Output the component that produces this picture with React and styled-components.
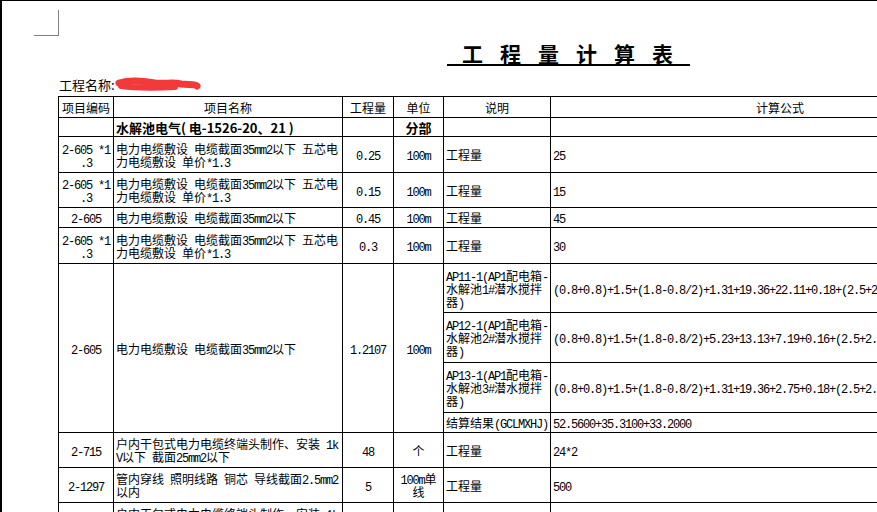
import React from 'react'
import styled, { createGlobalStyle } from 'styled-components'

const Global = createGlobalStyle`
  html, body { margin: 0; padding: 0; background: #fff; }
  body { font-family: "Noto Sans CJK SC", "Liberation Sans", sans-serif; color: #000; }
`

const Page = styled.div`
  width: 877px;
  height: 512px;
  box-sizing: border-box;
  border-top: 1px solid #000;
  border-left: 2px solid #000;
  overflow: hidden;
  background: #fff;
`

// crop mark in the top left of the page
const CornerMark = styled.div`
  margin: 9px 0 0 32px;
  width: 24px;
  height: 25px;
  border-right: 1px solid #808080;
  border-bottom: 1px solid #808080;
`

const TitleRow = styled.div`
  margin-top: 6px;
  padding-left: 445px;
`

const Title = styled.h1`
  display: inline-block;
  margin: 0;
  padding-left: 15px;
  font-size: 21px;
  line-height: 22px;
  font-weight: bold;
  letter-spacing: 17px;
  border-bottom: 2px solid #000;
  white-space: nowrap;
`

const NameRow = styled.div`
  display: flex;
  align-items: center;
  margin: 10px 0 0 57px;
  font-size: 13px;
  line-height: 16px;
`

const Table = styled.table`
  margin: 3px 0 0 56px;
  border-collapse: collapse;
  table-layout: fixed;
  width: 951px;
  font-size: 12px;
  line-height: 13px;
`

const Col = styled.col`
  width: ${p => p.$w}px;
`

const Row = styled.tr`
  height: ${p => p.$h}px;
`

const Cell = styled.td`
  border: 1px solid #000;
  padding: 0 2px;
  vertical-align: middle;
  text-align: ${p => p.$align || 'left'};
  font-weight: ${p => (p.$bold ? 'bold' : 'normal')};
  font-size: ${p => (p.$bold ? '13px' : '12px')};
  white-space: nowrap;
  overflow: hidden;
`

const Head = styled(Cell).attrs({ as: 'th' })`
  font-weight: normal;
  text-align: center;
`

const Line = styled.span`
  display: block;
  height: 13px;
  white-space: nowrap;
`

const Lat = styled.span`
  font-family: "Liberation Mono", "DejaVu Sans Mono", monospace;
  font-size: 12px;
  letter-spacing: -1.2px;
`

const mix = s =>
  s.split(/([ -~]+)/).map((p, i) => (/[ -~]/.test(p) ? <Lat key={i}>{p}</Lat> : p))

const Text = ({ lines }) =>
  [].concat(lines).map((l, i) => <Line key={i}>{mix(l)}</Line>)

const Scribble = () => (
  <svg width="86" height="16" viewBox="0 0 86 16">
    <path
      d="M4 6 C 14 3, 28 4, 40 6 C 52 7, 58 5, 66 7 C 74 8, 80 7, 82 9"
      stroke="#f23a3a"
      strokeWidth="7"
      strokeLinecap="round"
      fill="none"
    />
    <path d="M6 9 C 20 11, 40 11, 60 10" stroke="#f23a3a" strokeWidth="6" strokeLinecap="round" fill="none" />
  </svg>
)

const cable5 = ['电力电缆敷设 电缆截面35mm2以下 五芯电', '力电缆敷设 单价*1.3']

const rows = [
  { h: 36, code: ['2-605 *1', '.3'], name: cable5, qty: '0.25', unit: '100m', note: '工程量', formula: '25' },
  { h: 35, code: ['2-605 *1', '.3'], name: cable5, qty: '0.15', unit: '100m', note: '工程量', formula: '15' },
  { h: 20, code: '2-605', name: '电力电缆敷设 电缆截面35mm2以下', qty: '0.45', unit: '100m', note: '工程量', formula: '45' },
  { h: 36, code: ['2-605 *1', '.3'], name: cable5, qty: '0.3', unit: '100m', note: '工程量', formula: '30' },
]

const group = {
  code: '2-605',
  name: '电力电缆敷设 电缆截面35mm2以下',
  qty: '1.2107',
  unit: '100m',
  parts: [
    { h: 49, note: ['AP11-1(AP1配电箱-', '水解池1#潜水搅拌', '器)'], formula: '(0.8+0.8)+1.5+(1.8-0.8/2)+1.31+19.36+22.11+0.18+(2.5+2.5)*1.025' },
    { h: 50, note: ['AP12-1(AP1配电箱-', '水解池2#潜水搅拌', '器)'], formula: '(0.8+0.8)+1.5+(1.8-0.8/2)+5.23+13.13+7.19+0.16+(2.5+2.5)*1.025' },
    { h: 50, note: ['AP13-1(AP1配电箱-', '水解池3#潜水搅拌', '器)'], formula: '(0.8+0.8)+1.5+(1.8-0.8/2)+1.31+19.36+2.75+0.18+(2.5+2.5)*1.025' },
    { h: 20, note: '结算结果(GCLMXHJ)', formula: '52.5600+35.3100+33.2000' },
  ],
}

const tail = [
  { h: 35, code: '2-715', name: ['户内干包式电力电缆终端头制作、安装 1k', 'V以下 截面25mm2以下'], qty: '48', unit: '个', note: '工程量', formula: '24*2' },
  { h: 35, code: '2-1297', name: ['管内穿线 照明线路 铜芯 导线截面2.5mm2', '以内'], qty: '5', unit: ['100m单', '线'], note: '工程量', formula: '500' },
  { h: 35, code: '2-1298', name: ['户内干包式电力电缆终端头制作、安装 1k', 'V以下 截面35mm2以下'], qty: '26', unit: '个', note: '工程量', formula: '26' },
]

const ItemRow = ({ r }) => (
  <Row $h={r.h}>
    <Cell $align="center"><Text lines={r.code} /></Cell>
    <Cell><Text lines={r.name} /></Cell>
    <Cell $align="center"><Text lines={r.qty} /></Cell>
    <Cell $align="center"><Text lines={r.unit} /></Cell>
    <Cell><Text lines={r.note} /></Cell>
    <Cell><Text lines={r.formula} /></Cell>
  </Row>
)

export default function App() {
  return (
    <>
      <Global />
      <Page>
        <CornerMark />
        <TitleRow>
          <Title>工程量计算表</Title>
        </TitleRow>
        <NameRow>
          工程名称:<Scribble />
        </NameRow>
        <Table>
          <colgroup>
            {[55, 229, 51, 50, 107, 459].map((w, i) => <Col key={i} $w={w} />)}
          </colgroup>
          <tbody>
            <Row $h={21}>
              <Head>项目编码</Head>
              <Head>项目名称</Head>
              <Head>工程量</Head>
              <Head>单位</Head>
              <Head>说明</Head>
              <Head>计算公式</Head>
            </Row>
            <Row $h={19}>
              <Cell />
              <Cell $bold>水解池电气( 电-1526-20、21 )</Cell>
              <Cell />
              <Cell $bold $align="center">分部</Cell>
              <Cell />
              <Cell />
            </Row>
            {rows.map((r, i) => <ItemRow key={i} r={r} />)}
            {group.parts.map((p, i) => (
              <Row key={i} $h={p.h}>
                {i === 0 && (
                  <>
                    <Cell rowSpan={4} $align="center"><Text lines={group.code} /></Cell>
                    <Cell rowSpan={4}><Text lines={group.name} /></Cell>
                    <Cell rowSpan={4} $align="center"><Text lines={group.qty} /></Cell>
                    <Cell rowSpan={4} $align="center"><Text lines={group.unit} /></Cell>
                  </>
                )}
                <Cell><Text lines={p.note} /></Cell>
                <Cell><Text lines={p.formula} /></Cell>
              </Row>
            ))}
            {tail.map((r, i) => <ItemRow key={i} r={r} />)}
          </tbody>
        </Table>
      </Page>
    </>
  )
}
